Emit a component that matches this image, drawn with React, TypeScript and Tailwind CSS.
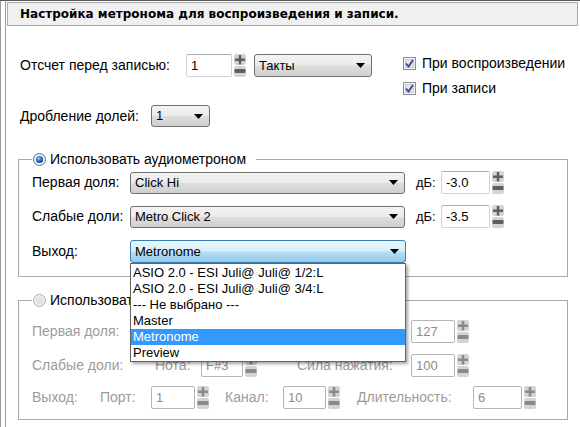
import React from "react";

const comboBg =
  "bg-[linear-gradient(to_bottom,#f3f3f3_0%,#ebebeb_48%,#dddddd_52%,#d0d0d0_100%)]";
const comboFocusBg =
  "bg-[linear-gradient(to_bottom,#eaf6fd_0%,#d8effc_45%,#b4dcf4_55%,#94c9ea_100%)]";

function Arrow() {
  return (
    <svg width="9" height="5" viewBox="0 0 9 5">
      <path d="M0 0 H9 L4.5 5 Z" fill="#000" />
    </svg>
  );
}

function Spin({ disabled }: { disabled?: boolean }) {
  const dark = disabled ? "#8a8a8a" : "#5f5f5f";
  return (
    <svg width="12" height="23" viewBox="0 0 12 23" className="shrink-0">
      <rect x="0" y="0" width="12" height="11" rx="2" fill="#d4d4d4" />
      <rect x="1" y="4.5" width="10" height="2.5" fill={dark} />
      <rect x="4.75" y="1" width="2.5" height="9.5" fill={dark} />
      <rect x="0" y="12" width="12" height="11" rx="2" fill="#d4d4d4" />
      <rect x="0.5" y="15" width="11" height="4" rx="1" fill={dark} />
    </svg>
  );
}

function Combo({
  w,
  h = 22,
  text,
  focused,
}: {
  w: string;
  h?: number;
  text: string;
  focused?: boolean;
}) {
  return (
    <div
      className={`${w} ${h === 23 ? "h-[23px]" : "h-[22px]"} shrink-0 flex items-center justify-between rounded-[3px] border pl-[4px] pr-[6px] text-[13px] ${
        focused ? `${comboFocusBg} border-[#3c7fb1]` : `${comboBg} border-[#707070]`
      }`}
    >
      <span>{text}</span>
      <Arrow />
    </div>
  );
}

function Field({ w, text, disabled }: { w: string; text: string; disabled?: boolean }) {
  return (
    <div
      className={`${w} h-[23px] shrink-0 rounded-[2px] border bg-white pl-[4px] text-[13px] leading-[21px] ${
        disabled
          ? "border-[#b5b5b5] text-[#8d8d8d]"
          : "border-[#d0d4da] border-t-[#abadb3] text-black"
      }`}
    >
      {text}
    </div>
  );
}

function Check({ label }: { label: string }) {
  return (
    <div className="flex h-[13px] items-center gap-[6px]">
      <svg width="13" height="13" viewBox="0 0 13 13" className="shrink-0">
        <rect x="0.5" y="0.5" width="12" height="12" fill="#f4f4f4" stroke="#8e8f8f" />
        <rect x="2.5" y="2.5" width="8" height="8" fill="#e2e4e8" stroke="#c9cbd0" />
        <path d="M3 6.5 L5.5 9.5 L10 3" fill="none" stroke="#2d4a8a" strokeWidth="1.8" />
      </svg>
      <span className="leading-[13px]">{label}</span>
    </div>
  );
}

function Radio({ on }: { on?: boolean }) {
  return (
    <svg width="13" height="13" viewBox="0 0 13 13" className="shrink-0">
      <defs>
        <radialGradient id="rdot" cx="0.4" cy="0.35" r="0.7">
          <stop offset="0" stopColor="#9fd4ff" />
          <stop offset="0.5" stopColor="#2a76c6" />
          <stop offset="1" stopColor="#0d3c7a" />
        </radialGradient>
      </defs>
      <circle cx="6.5" cy="6.5" r="6" fill={on ? "#eef2f6" : "#f1f1f1"} stroke={on ? "#58708c" : "#a8a8a8"} />
      {on ? (
        <circle cx="6.5" cy="6.5" r="3.6" fill="url(#rdot)" />
      ) : (
        <circle cx="6.5" cy="6.5" r="4" fill="#e2e2e2" />
      )}
    </svg>
  );
}

const menuItems = [
  "ASIO 2.0 - ESI Juli@ Juli@ 1/2:L",
  "ASIO 2.0 - ESI Juli@ Juli@ 3/4:L",
  "--- Не выбрано ---",
  "Master",
  "Metronome",
  "Preview",
];

export default function App() {
  return (
    <div className="w-[580px] h-[427px] overflow-hidden bg-white flex border-t border-[#5a5a5a] font-['Liberation_Sans',Arial,sans-serif] text-[14px] text-black">
      <div className="w-[6px] shrink-0 border-l border-r border-[#9a9a9a]" />
      <div className="ml-[1px] flex-1 flex flex-col">
        <div className="mt-[1px] mr-[2px] h-[24px] border border-[#a9a9a9] bg-[#f0f0f0] pl-[12px] flex items-center font-['DejaVu_Sans',sans-serif] font-bold text-[12px]">
          Настройка метронома для воспроизведения и записи.
        </div>

        <div className="mt-[28px] pl-[13px] flex items-start">
          <div className="w-[166px] h-[23px] flex items-center">Отсчет перед записью:</div>
          <Field w="w-[46px]" text="1" />
          <div className="ml-[2px]">
            <Spin />
          </div>
          <div className="ml-[8px]">
            <Combo w="w-[118px]" h={23} text="Такты" />
          </div>
          <div className="ml-[31px] mt-[3px] flex flex-col gap-[12px]">
            <Check label="При воспроизведении" />
            <Check label="При записи" />
          </div>
        </div>

        <div className="mt-[10px] pl-[13px] flex items-center">
          <div className="w-[131px]">Дробление долей:</div>
          <Combo w="w-[59px]" text="1" />
        </div>

        <fieldset className="mt-[25px] ml-[11px] w-[550px] border border-[#a9a9a9] pt-[4px] pb-[13px] pl-[13px]">
          <legend className="pl-[1px] pr-[10px] h-[15px] flex items-center gap-[4px] leading-[15px]">
            <Radio on />
            <span>Использовать аудиометроном</span>
          </legend>
          <div className="flex flex-col">
            <div className="h-[23px] flex items-center">
              <div className="w-[98px]">Первая доля:</div>
              <Combo w="w-[275px]" text="Click Hi" />
              <div className="ml-[11px] w-[25px] text-[13px]">дБ:</div>
              <Field w="w-[49px]" text="-3.0" />
              <div className="ml-[2px]">
                <Spin />
              </div>
            </div>
            <div className="mt-[11px] h-[23px] flex items-center">
              <div className="w-[98px]">Слабые доли:</div>
              <Combo w="w-[275px]" text="Metro Click 2" />
              <div className="ml-[11px] w-[25px] text-[13px]">дБ:</div>
              <Field w="w-[49px]" text="-3.5" />
              <div className="ml-[2px]">
                <Spin />
              </div>
            </div>
            <div className="mt-[12px] h-[23px] flex items-center">
              <div className="w-[98px]">Выход:</div>
              <div className="relative z-10">
                <Combo w="w-[276px]" h={23} text="Metronome" focused />
                <ul className="absolute left-0 top-full w-[276px] border border-[#646464] bg-white pt-[1px] pb-[0px] shadow-[2px_2px_3px_rgba(0,0,0,0.35)] text-[13px]">
                  {menuItems.map((m) => (
                    <li
                      key={m}
                      className={`h-[16px] leading-[16px] pl-[2px] whitespace-nowrap ${
                        m === "Metronome" ? "bg-[#3399ff] text-white" : "text-black"
                      }`}
                    >
                      {m}
                    </li>
                  ))}
                </ul>
              </div>
            </div>
          </div>
        </fieldset>

        <fieldset className="mt-[16px] ml-[11px] w-[550px] border border-[#a9a9a9] pt-[12px] pb-[10px] pl-[13px]">
          <legend className="pl-[1px] pr-[10px] h-[15px] flex items-center gap-[4px] leading-[15px]">
            <Radio />
            <span>Использовать MIDI-метроном</span>
          </legend>
          <div className="flex flex-col text-[#9b9b9b]">
            <div className="h-[23px] flex items-center">
              <div className="w-[123px]">Первая доля:</div>
              <div className="w-[46px]">Нота:</div>
              <Field w="w-[42px]" text="C#3" disabled />
              <div className="ml-[2px]">
                <Spin disabled />
              </div>
              <div className="ml-[40px] w-[114px]">Сила нажатия:</div>
              <Field w="w-[44px]" text="127" disabled />
              <div className="ml-[2px]">
                <Spin disabled />
              </div>
            </div>
            <div className="mt-[11px] h-[23px] flex items-center">
              <div className="w-[123px]">Слабые доли:</div>
              <div className="w-[46px]">Нота:</div>
              <Field w="w-[42px]" text="F#3" disabled />
              <div className="ml-[2px]">
                <Spin disabled />
              </div>
              <div className="ml-[40px] w-[114px]">Сила нажатия:</div>
              <Field w="w-[44px]" text="100" disabled />
              <div className="ml-[2px]">
                <Spin disabled />
              </div>
            </div>
            <div className="mt-[9px] h-[23px] flex items-center">
              <div className="w-[68px]">Выход:</div>
              <div className="w-[51px]">Порт:</div>
              <Field w="w-[44px]" text="1" disabled />
              <div className="ml-[2px]">
                <Spin disabled />
              </div>
              <div className="ml-[16px] w-[58px]">Канал:</div>
              <Field w="w-[43px]" text="10" disabled />
              <div className="ml-[2px]">
                <Spin disabled />
              </div>
              <div className="ml-[17px] w-[116px]">Длительность:</div>
              <Field w="w-[49px]" text="6" disabled />
              <div className="ml-[2px]">
                <Spin disabled />
              </div>
            </div>
          </div>
        </fieldset>
      </div>
    </div>
  );
}
